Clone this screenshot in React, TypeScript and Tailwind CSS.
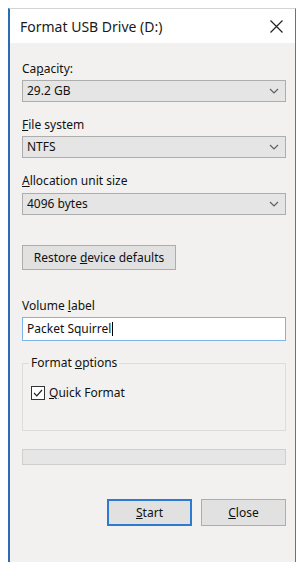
import React from "react"

const font = { fontFamily: '"Noto Sans", "Open Sans", sans-serif' }

function Chevron() {
  return (
    <svg width="10" height="6" viewBox="0 0 10 6" className="text-[#606060]">
      <path d="M1 1 L5 5 L9 1" fill="none" stroke="currentColor" strokeWidth="1.2" />
    </svg>
  )
}

function Combo({ value }: { value: string }) {
  return (
    <div className="flex h-[22px] w-[264px] items-center justify-between border border-[#adadad] bg-[#e5e5e5] pl-[4px] pr-[6px] text-[12px] text-[#111]">
      <span>{value}</span>
      <Chevron />
    </div>
  )
}

function Label({ children, mt }: { children: React.ReactNode; mt: string }) {
  return <div className={`${mt} h-[16px] text-[12px] leading-[16px] text-[#111]`}>{children}</div>
}

export default function App() {
  return (
    <div className="h-[570px] w-[308px] bg-white pl-[8px] pt-[8px]" style={font}>
      <div className="flex h-[554px] w-[288px] flex-col border-l-2 border-r border-t border-l-[#2b6cb5] border-r-[#3b7cc4] border-t-[#d4d4d4]">
        {/* title bar */}
        <div className="flex h-[34px] items-center justify-between bg-white pl-[10px] pr-[12px]">
          <span className="text-[14px] text-[#1a1a1a]">Format USB Drive (D:)</span>
          <svg width="13" height="13" viewBox="0 0 13 13">
            <path d="M0.5 0.5 L12.5 12.5 M12.5 0.5 L0.5 12.5" stroke="#222" strokeWidth="1.2" />
          </svg>
        </div>

        {/* body */}
        <div className="flex flex-1 flex-col bg-[#f2f1ef] pl-[12px]">
          <Label mt="mt-[18px]">
            Ca<u>p</u>acity:
          </Label>
          <div className="mt-[3px]">
            <Combo value="29.2 GB" />
          </div>

          <Label mt="mt-[15px]">
            <u>F</u>ile system
          </Label>
          <div className="mt-[3px]">
            <Combo value="NTFS" />
          </div>

          <Label mt="mt-[15px]">
            <u>A</u>llocation unit size
          </Label>
          <div className="mt-[4px]">
            <Combo value="4096 bytes" />
          </div>

          <button className="mt-[30px] flex h-[25px] w-[154px] items-center justify-center border border-[#adadad] bg-[#e1e1e1] text-[12px] text-[#111]">
            <span>
              Restore <u>d</u>evice defaults
            </span>
          </button>

          <Label mt="mt-[28px]">
            Volume <u>l</u>abel
          </Label>
          <div className="mt-[3px] flex h-[24px] w-[264px] items-center border border-[#7fb4e6] bg-white pl-[4px] text-[12px] text-[#111]">
            <span>Packet Squirrel</span>
            <span className="ml-[1px] inline-block h-[14px] w-[1px] bg-black" />
          </div>

          {/* group box */}
          <div className="relative mt-[22px] h-[68px] w-[264px] border border-[#dcdcdc]">
            <span className="absolute left-[6px] top-[-9px] bg-[#f2f1ef] px-[2px] text-[12px] leading-[16px] text-[#111]">
              Format <u>o</u>ptions
            </span>
            <div className="ml-[8px] mt-[20px] flex items-center gap-[4px] text-[12px] text-[#111]">
              <span className="flex h-[14px] w-[14px] items-center justify-center border border-[#333] bg-white">
                <svg width="10" height="8" viewBox="0 0 10 8">
                  <path d="M1 4 L3.8 6.8 L9 1" fill="none" stroke="#222" strokeWidth="1.2" />
                </svg>
              </span>
              <span>
                <u>Q</u>uick Format
              </span>
            </div>
          </div>

          <div className="mt-[18px] h-[16px] w-[264px] border border-[#cfcfcf] bg-[#e6e6e6]" />

          <div className="mt-[34px] flex w-[264px] justify-end gap-[9px]">
            <button className="flex h-[27px] w-[85px] items-center justify-center border-2 border-[#2c7bd0] bg-[#e1e1e1] text-[12px] text-[#111]">
              <span>
                <u>S</u>tart
              </span>
            </button>
            <button className="flex h-[27px] w-[85px] items-center justify-center border border-[#adadad] bg-[#e1e1e1] text-[12px] text-[#111]">
              <span>
                <u>C</u>lose
              </span>
            </button>
          </div>
        </div>
      </div>
    </div>
  )
}
